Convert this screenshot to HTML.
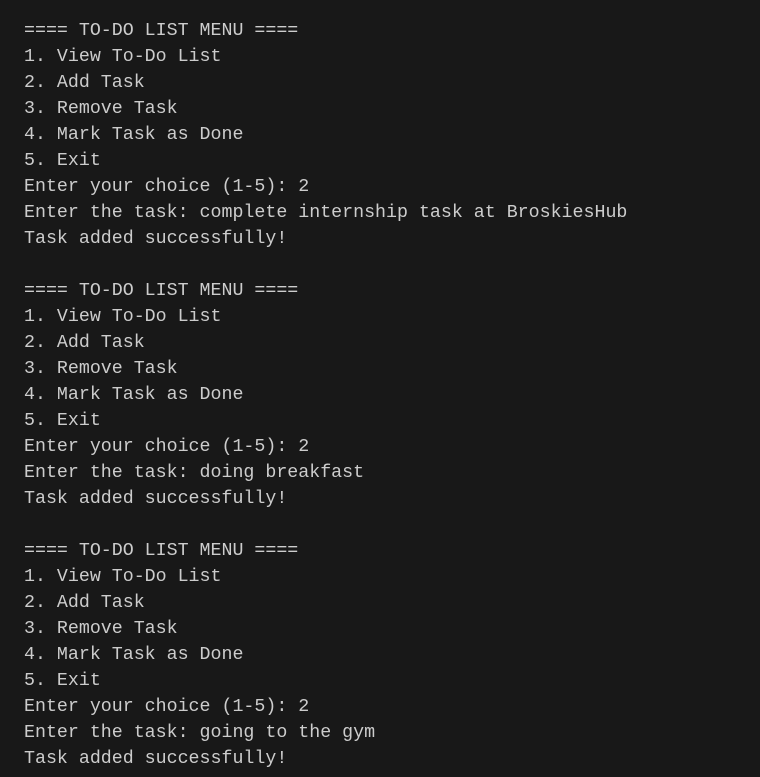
<!DOCTYPE html>
<html><head><style>
html,body{margin:0;padding:0;background:#181818;}
body{width:760px;height:777px;overflow:hidden;}
pre{margin:0;padding:18px 0 0 24px;font-family:"Liberation Mono","DejaVu Sans Mono",monospace;font-size:18.3px;line-height:26px;color:#cccccc;}
</style></head><body><pre>==== TO-DO LIST MENU ====
1. View To-Do List
2. Add Task
3. Remove Task
4. Mark Task as Done
5. Exit
Enter your choice (1-5): 2
Enter the task: complete internship task at BroskiesHub
Task added successfully!

==== TO-DO LIST MENU ====
1. View To-Do List
2. Add Task
3. Remove Task
4. Mark Task as Done
5. Exit
Enter your choice (1-5): 2
Enter the task: doing breakfast
Task added successfully!

==== TO-DO LIST MENU ====
1. View To-Do List
2. Add Task
3. Remove Task
4. Mark Task as Done
5. Exit
Enter your choice (1-5): 2
Enter the task: going to the gym
Task added successfully!</pre></body></html>
